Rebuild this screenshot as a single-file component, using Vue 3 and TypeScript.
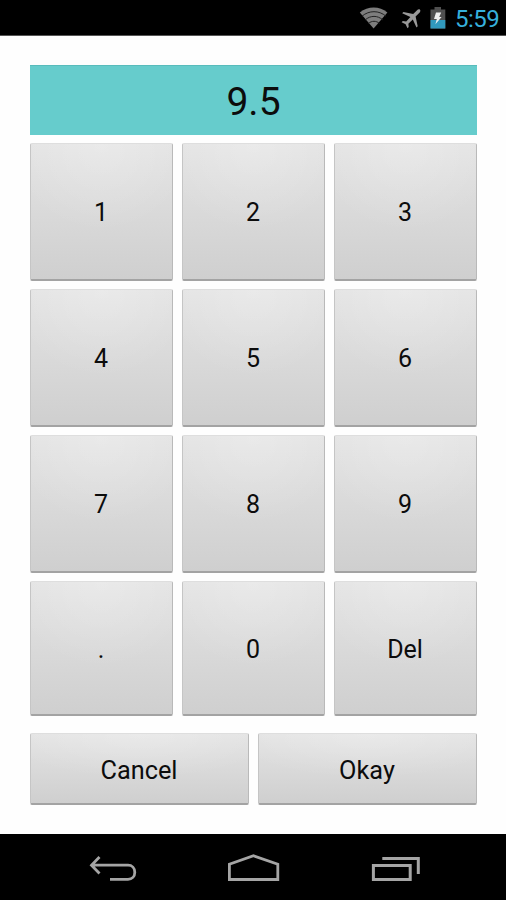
<script setup lang="ts">
import { ref } from 'vue'

const value = ref<string>('9.5')
const keys: string[] = ['1', '2', '3', '4', '5', '6', '7', '8', '9', '.', '0', 'Del']

function press(key: string): void {
  value.value = key === 'Del' ? value.value.slice(0, -1) : value.value + key
}

function clear(): void {
  value.value = ''
}
</script>

<template>
  <div class="screen">
    <header class="status">
      <svg class="wifi" width="30" height="22" viewBox="0 0 30 22">
        <path d="M.8 5.6C9 -1.2 20.5 -1.2 28.4 5.6L14.6 21.5Z" fill="#7d7d7d" />
        <path d="M3 9.2C10 3.2 20 3.2 27 9.2M6.2 12.9C11.5 8.2 18.5 8.2 23.8 12.9M9.5 16.4C12.8 13.6 17.2 13.6 20.5 16.4" fill="none" stroke="#222" stroke-width="1" />
      </svg>
      <svg class="plane" width="20" height="20" viewBox="0 0 20 20">
        <path d="M19 .7C18.1 -.1 16.8 .5 15.8 1.5L12.2 5.1L2.4 3L1.2 4.2L9.4 7.9L5.2 12.4L1.8 12.1L.6 13.3L4.6 15.3L6.5 19.3L7.7 18.1L7.4 14.7L11.8 10.4L15.5 18.4L16.7 17.2L14.6 7.4L18.2 3.9C19.2 2.9 19.8 1.5 19 .7Z" fill="#999" />
      </svg>
      <svg class="battery" width="16" height="22" viewBox="0 0 16 22">
        <path d="M4.5 0h6.5v2.4H15.3V21.5H.5V2.4h4Z" fill="#505050" />
        <path d="M.5 13h14.8v8.5H.5Z" fill="#3199bd" />
        <path d="M6 5.5h5.2L9.2 10H11.6L5.4 17.3L6.8 12H4Z" fill="#eee" />
      </svg>
      <span class="clock">5:59</span>
    </header>

    <main class="content">
      <div class="display">{{ value }}</div>
      <div class="keypad">
        <button v-for="key in keys" :key="key" class="key" type="button" @click="press(key)">
          <span>{{ key }}</span>
        </button>
      </div>
      <div class="actions">
        <button class="key" type="button" @click="clear"><span>Cancel</span></button>
        <button class="key" type="button"><span>Okay</span></button>
      </div>
    </main>

    <nav class="nav">
      <svg width="370" height="60" viewBox="0 0 370 60" fill="none" stroke="#a5a5a5" stroke-width="2.8">
        <path d="M29.5 17L21.5 25.2L29.5 33.5M22 25.2H58C62 25.2 64.8 28.2 64.8 32.3S62 39.4 58 39.4H40" />
        <path d="M159.4 39.5V24.2L183.5 15.8L207.8 24.2V39.5Z" />
        <path d="M303.4 25.4H340.2V39.5H303.4ZM312.3 18.4H348.3V34" stroke-width="3" />
      </svg>
    </nav>
  </div>
</template>

<style>
body {
  margin: 0;
  background: #fff;
}
</style>

<style scoped>
.screen {
  width: 506px;
  height: 900px;
  display: flex;
  flex-direction: column;
  background: #fefefe;
  font-family: Roboto, "Noto Sans", sans-serif;
  color: #0c0c0c;
  overflow: hidden;
}

.status {
  box-sizing: border-box;
  height: 36px;
  flex: none;
  display: flex;
  align-items: flex-start;
  justify-content: flex-end;
  padding: 7px 9px 0 0;
  background: #000;
  border-bottom: 1px solid #555;
}

.wifi {
  margin-right: 12px;
}

.plane {
  margin-right: 9px;
  margin-top: 2px;
}

.battery {
  margin-right: 9px;
}

.clock {
  width: 42px;
  font-size: 24px;
  line-height: 24px;
  letter-spacing: -0.5px;
  white-space: nowrap;
  color: #36b0dc;
}

.content {
  flex: 1;
  display: flex;
  flex-direction: column;
  padding: 29px 29px 0 30px;
}

.display {
  height: 70px;
  margin-bottom: 8px;
  display: flex;
  align-items: center;
  justify-content: center;
  background: #66cccc;
  box-shadow: inset 0 1px #58bcbc;
  font-size: 39px;
  padding-top: 3px;
  box-sizing: border-box;
}

.keypad {
  display: grid;
  grid-template-columns: repeat(3, 1fr);
  grid-template-rows: 138px 138px 138px 135px;
  gap: 8px 9px;
}

.actions {
  display: grid;
  grid-template-columns: repeat(2, 1fr);
  grid-template-rows: 72px;
  column-gap: 9px;
  margin-top: 17px;
}

.key {
  margin: 0;
  padding: 2px 1px 0 0;
  border: 1px solid;
  border-color: #dedede #b9b9b9 #a3a3a3 #c5c5c5;
  border-bottom-width: 2px;
  border-radius: 2px;
  background:
    radial-gradient(ellipse 65% 65% at 50% 0, rgba(255, 255, 255, 0.22), rgba(255, 255, 255, 0)),
    linear-gradient(#e4e4e4, #cfcfcf);
  font-family: inherit;
  font-size: 25px;
  color: inherit;
}

.actions .key {
  padding-top: 4px;
  font-size: 25.3px;
}

.nav {
  height: 66px;
  flex: none;
  display: flex;
  align-items: flex-end;
  justify-content: center;
  background: #000;
}

.nav svg {
  margin-left: 4px;
}
</style>
